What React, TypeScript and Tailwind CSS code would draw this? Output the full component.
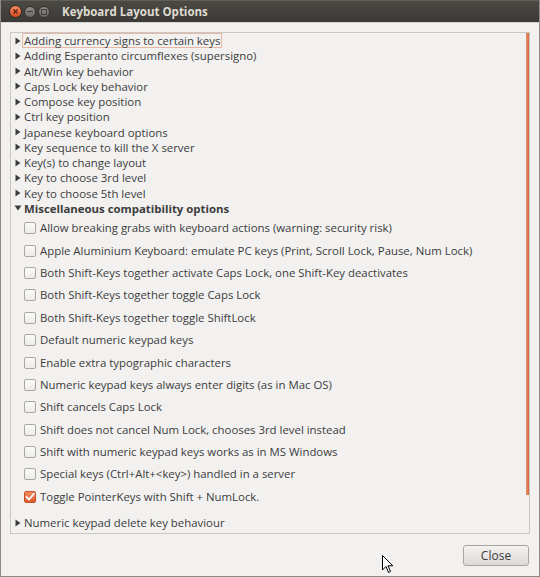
import React from "react";

const collapsed = [
  "Adding currency signs to certain keys",
  "Adding Esperanto circumflexes (supersigno)",
  "Alt/Win key behavior",
  "Caps Lock key behavior",
  "Compose key position",
  "Ctrl key position",
  "Japanese keyboard options",
  "Key sequence to kill the X server",
  "Key(s) to change layout",
  "Key to choose 3rd level",
  "Key to choose 5th level",
];

const options = [
  "Allow breaking grabs with keyboard actions (warning: security risk)",
  "Apple Aluminium Keyboard: emulate PC keys (Print, Scroll Lock, Pause, Num Lock)",
  "Both Shift-Keys together activate Caps Lock, one Shift-Key deactivates",
  "Both Shift-Keys together toggle Caps Lock",
  "Both Shift-Keys together toggle ShiftLock",
  "Default numeric keypad keys",
  "Enable extra typographic characters",
  "Numeric keypad keys always enter digits (as in Mac OS)",
  "Shift cancels Caps Lock",
  "Shift does not cancel Num Lock, chooses 3rd level instead",
  "Shift with numeric keypad keys works as in MS Windows",
  "Special keys (Ctrl+Alt+<key>) handled in a server",
  "Toggle PointerKeys with Shift + NumLock.",
];

function Arrow({ down }: { down?: boolean }) {
  return (
    <svg width="8" height="8" viewBox="0 0 8 8" className="shrink-0">
      {down ? (
        <polygon points="0.5,1.5 7.5,1.5 4,6.5" fill="#3c3c3c" />
      ) : (
        <polygon points="1.5,0.5 6.5,4 1.5,7.5" fill="#3c3c3c" />
      )}
    </svg>
  );
}

function Checkbox({ checked }: { checked?: boolean }) {
  if (checked) {
    return (
      <div className="w-[12px] h-[12px] rounded-[2px] border border-[#c5512a] bg-gradient-to-b from-[#f08c5e] to-[#dd5a2b] flex items-center justify-center shrink-0">
        <svg width="10" height="10" viewBox="0 0 10 10">
          <path d="M1.5 5 L4 7.5 L8.8 1.8" stroke="#fff" strokeWidth="1.8" fill="none" strokeLinecap="round" strokeLinejoin="round" />
        </svg>
      </div>
    );
  }
  return (
    <div className="w-[12px] h-[12px] rounded-[2px] border border-[#aaa7a2] bg-gradient-to-b from-[#fbfbfa] to-[#ecebe9] shrink-0" />
  );
}

export default function App() {
  return (
    <div
      className="relative w-[540px] h-[577px] bg-[#f2f1f0] text-[#3c3c3c] overflow-hidden border-x border-b border-[#8e8c88] flex flex-col"
      style={{ fontFamily: '"Open Sans", "Noto Sans", sans-serif' }}
    >
      {/* Title bar */}
      <div className="h-[22px] shrink-0 bg-gradient-to-b from-[#4a4944] to-[#3b3a36] border-t border-[#5f5e59] flex items-center -mx-px">
        <div className="flex items-center gap-[2px] pl-[9px]">
          <div className="w-[13px] h-[13px] rounded-full bg-gradient-to-b from-[#f58a62] to-[#d84a1c] border border-[#3a2a22] flex items-center justify-center">
            <svg width="7" height="7" viewBox="0 0 7 7">
              <path d="M1.5 1.5 L5.5 5.5 M5.5 1.5 L1.5 5.5" stroke="#5a2410" strokeWidth="1.3" />
            </svg>
          </div>
          <div className="w-[12px] h-[12px] rounded-full bg-gradient-to-b from-[#8d8c86] to-[#6b6a65] border border-[#33322f] flex items-center justify-center">
            <div className="w-[6px] h-[1.5px] bg-[#3f3e3a]" />
          </div>
          <div className="w-[12px] h-[12px] rounded-full bg-gradient-to-b from-[#8d8c86] to-[#6b6a65] border border-[#33322f] flex items-center justify-center">
            <div className="w-[6px] h-[6px] border border-[#3f3e3a]" />
          </div>
        </div>
        <div className="ml-[12px] text-[11.5px] font-bold text-[#dfdbd2] leading-none">
          Keyboard Layout Options
        </div>
      </div>
      <div className="h-px bg-[#d8d6d2] -mx-px" />

      {/* Tree frame */}
      <div className="mt-[9px] ml-[9px] w-[520px] h-[502px] border border-[#c9c7c3] relative overflow-hidden text-[11.4px]">
        <div className="flex flex-col">
          {collapsed.map((t, i) => (
            <div key={t} className="h-[15.25px] flex items-center pl-[3px]">
              <Arrow />
              <span
                className={
                  "leading-[13px] px-[1px] " +
                  (i === 0 ? "border border-[#e8b7a3]" : "border border-transparent")
                }
              >
                {t}
              </span>
            </div>
          ))}
          <div className="h-[15.25px] flex items-center pl-[3px]">
            <Arrow down />
            <span className="px-[2px] font-bold leading-[15px]">Miscellaneous compatibility options</span>
          </div>
          <div className="mt-[1px]">
            {options.map((t, i) => (
              <div key={t} className="h-[22.4px] flex items-center pl-[13px] gap-[4px]">
                <Checkbox checked={i === options.length - 1} />
                <span className="leading-[16px]">{t}</span>
              </div>
            ))}
          </div>
          <div className="mt-[7px] h-[15.25px] flex items-center pl-[3px]">
            <Arrow />
            <span className="px-[2px] leading-[15px]">Numeric keypad delete key behaviour</span>
          </div>
          <div className="h-[15.25px] flex items-center pl-[3px]">
            <Arrow />
            <span className="px-[2px] leading-[15px]">Numeric keypad layout selection</span>
          </div>
        </div>
        {/* overlay scrollbar */}
        <div className="absolute right-0 top-0 w-[3px] h-[462px] bg-gradient-to-r from-[#e8906c] to-[#d9663d]" />
      </div>

      {/* Button row */}
      <div className="flex justify-end pr-[10px] mt-[11px]">
        <button className="w-[66px] h-[21px] rounded-[3px] border border-[#a8a6a2] bg-gradient-to-b from-[#f4f3f2] to-[#dcdad6] text-[12px] text-[#3c3c3c] flex items-center justify-center">
          Close
        </button>
      </div>

      {/* mouse cursor */}
      <svg className="absolute left-[381px] top-[555px]" width="12" height="19" viewBox="0 0 12 19">
        <path d="M0.5 0.5 L0.5 15 L4 11.5 L6.5 17.5 L8.5 16.5 L6 10.8 L10.8 10.8 Z" fill="#fff" stroke="#000" strokeWidth="1" strokeLinejoin="round" />
      </svg>
    </div>
  );
}
